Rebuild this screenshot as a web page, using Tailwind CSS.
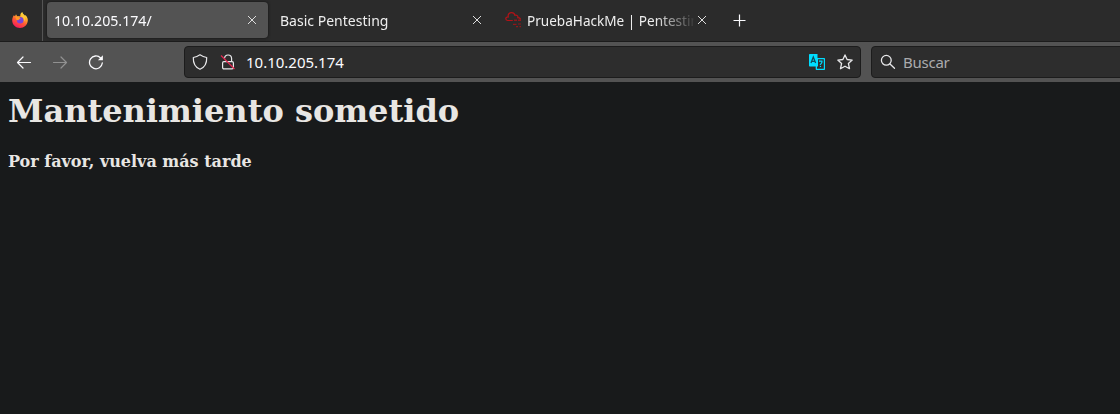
<!DOCTYPE html>
<html lang="es">
<head>
<meta charset="utf-8">
<title>10.10.205.174/</title>
<script src="https://cdn.jsdelivr.net/npm/@tailwindcss/browser@4"></script>
</head>
<body class="h-[414px] w-[1120px] overflow-hidden bg-[#181a1b] font-['Noto_Sans',sans-serif] text-[#fbfbfe]">
<div class="flex h-[42px] border-b border-[#1c1c1c] bg-[#2b2b2b] text-[15px]">
  <div class="flex w-[43px] shrink-0 items-center border-r border-[#555] pl-3">
    <svg class="-mt-0.5 h-4 w-4" viewBox="0 0 16 16">
      <defs>
        <linearGradient id="fire" x1=".8" y1="0" x2=".3" y2="1"><stop offset="0" stop-color="#fff44f"/><stop offset=".3" stop-color="#ffb52b"/><stop offset=".6" stop-color="#ff5b35"/><stop offset="1" stop-color="#f5155f"/></linearGradient>
      </defs>
      <path fill="url(#fire)" d="M1.8 3.2 3 4.3 4 2.2l1.2 2h3.1C8 2.600 8.800 1 10.400 0c.2 1.800 1.500 2.300 2.500 3.500l.7-.2C15.300 5 16 7 15.800 8.800 15.400 13 12 16 8 16 3.700 16 .2 12.700.2 8.500.2 6.500.8 4.700 1.800 3.200Z"/>
      <circle cx="8.200" cy="8.300" r="3.300" fill="#7744dc"/>
      <path fill="#ff9a28" d="M3.300 4.800 6.500 4.600 8.700 6.300 6.900 7.400 6.300 8.300 4.500 8Z"/>
      <path fill="#ffc83b" d="M9.300 4.500c2.500.7 3.200 3 2.500 5 1.300-1 1.600-3.500.6-5.500L10.400 1.500Z"/>
    </svg>
  </div>
  <div class="ml-1 mt-0.5 flex h-9 w-[221px] shrink-0 items-center justify-between rounded bg-[#535353] pl-[7px] pr-[11px] shadow-[0_0_3px_#111]">
    <span class="origin-left scale-x-[0.945]">10.10.205.174/</span>
    <svg class="h-[10px] w-[10px]" viewBox="0 0 10 10" fill="none" stroke="#ddd" stroke-width="1"><path d="m1 1 8 8M9 1 1 9"/></svg>
  </div>
  <div class="mt-0.5 flex h-9 w-[225px] shrink-0 items-center justify-between pl-3 pr-[11px]">
    <span class="origin-left scale-x-[0.935] text-[#eee]">Basic Pentesting</span>
    <svg class="h-[10px] w-[10px]" viewBox="0 0 10 10" fill="none" stroke="#ddd" stroke-width="1"><path d="m1 1 8 8M9 1 1 9"/></svg>
  </div>
  <div class="mt-0.5 flex h-9 w-[225px] shrink-0 items-center pl-3">
    <svg class="h-4 w-4 shrink-0" viewBox="0 0 16 16" fill="none" stroke="#b31217" stroke-width="1.200"><path d="M7.800 8.500H2.600C.2 8.300-.1 5 3.300 4.900 2.600 2.200 4.500.6 6.500.6c1.800 0 3 .7 3.300 2.600 2-.6 3.600.8 3 2.500 1.600 0 2.500.4 2.600 1.800"/><path stroke-width="1.600" stroke-opacity=".75" stroke-dasharray="3 1" d="M9 8.200h7"/><path stroke-opacity=".75" d="M8 12.300h3.500M13 12h3M11 14.700h2M14.500 14.700H16"/></svg>
    <div class="ml-1.5 w-[167px] [mask-image:linear-gradient(to_right,#000_128px,transparent_170px)]"><span class="block w-[184px] origin-left scale-x-[0.905] overflow-hidden whitespace-nowrap text-[#eee]">PruebaHackMe | Pentesting</span></div>
    <svg class="ml-[3px] h-[10px] w-[10px] shrink-0" viewBox="0 0 10 10" fill="none" stroke="#ddd" stroke-width="1"><path d="m1 1 8 8M9 1 1 9"/></svg>
  </div>
  <svg class="ml-[15px] mt-[14px] h-[13px] w-[13px]" viewBox="0 0 13 13" fill="none" stroke="#fbfbfe" stroke-width="1.200"><path d="M6.500.5v12M.5 6.500h12"/></svg>
</div>
<div class="flex h-10 items-center bg-[#535353] text-[15px]">
  <svg class="ml-4 h-4 w-4 shrink-0" viewBox="0 0 16 16" fill="none" stroke="#fbfbfe" stroke-width="1.200" stroke-linecap="round" stroke-linejoin="round"><path d="M14.500 8.500H1.500M7 3 1.500 8.500 7 14"/></svg>
  <svg class="ml-5 h-4 w-4 shrink-0" viewBox="0 0 16 16" fill="none" stroke="#919191" stroke-width="1.200" stroke-linecap="round" stroke-linejoin="round"><path d="M1.500 8.500h13M9 3l5.500 5.500L9 14"/></svg>
  <svg class="ml-5 h-4 w-4 shrink-0" viewBox="0 0 16 16" fill="none" stroke="#fbfbfe" stroke-width="1.300" stroke-linecap="round"><path d="M12.600 4A6.400 6.400 0 1 0 14.300 9"/><path fill="#fbfbfe" stroke="none" d="M14.900 1.300v5H9.900Z"/></svg>
  <div class="ml-20 flex h-8 w-[677px] shrink-0 items-center rounded border border-[#1c1c1c] bg-[#2d2d2d] px-[7px]">
    <svg class="h-4 w-4 shrink-0" viewBox="0 0 16 16" fill="none" stroke="#e8e8ea" stroke-width="1.200" stroke-linejoin="round"><path d="M8 .8c2 1.400 4.200 2.300 6.700 2.700.2 5-1.700 9.700-6.700 11.800C3 13.200 1.100 8.500 1.300 3.500 3.800 3.100 6 2.200 8 .8Z"/></svg>
    <svg class="ml-3 h-4 w-4 shrink-0" viewBox="0 0 16 16" fill="none" stroke="#e8e8ea" stroke-width="1.200"><rect x="2.600" y="7.600" width="10.800" height="7.300" rx="1.300"/><path d="M4.600 4.200C5 -.2 11.400 0 11.600 4.500v3"/><path stroke="#e22850" stroke-width="1.300" d="m1 1.500 13.500 13.500"/></svg>
    <span class="ml-[10px]">10.10.205.174</span>
    <svg class="ml-auto h-4 w-4 shrink-0" viewBox="0 0 16 16"><path fill="#00ddff" d="M.8 0h7.700v4h6.700q.8 0 .8.800v10.400q0 .8-.8.800H7.500q-.8 0-.8-.8V12.500H.8Q0 12.500 0 11.700V.8Q0 0 .8 0Z"/><path fill="#2d2d2d" d="M9 5.200h5.800v9.500H8v-2.200h1Z"/><path fill="none" stroke="#104c5a" stroke-width="1.300" d="M2 9 4.300 3 6.600 9M2.800 7.300h3"/><path fill="none" stroke="#00ddff" stroke-width="1.200" d="M10 7.200h3.500M13 7c.3 2-1 2.500-2 4M11.500 12v1"/></svg>
    <svg class="ml-3 h-4 w-4 shrink-0" viewBox="0 0 16 16" fill="none" stroke="#e8e8ea" stroke-width="1.300" stroke-linejoin="round"><path d="m8 .9 2.100 4.600 5.100.6-3.800 3.400 1.100 5.200L8 12.200l-4.500 2.500 1.100-5.200L.8 6.100l5.100-.6Z"/></svg>
  </div>
  <div class="ml-[10px] flex h-8 w-[260px] shrink-0 items-center rounded border border-[#1c1c1c] bg-[#2d2d2d] pl-2">
    <svg class="h-4 w-4" viewBox="0 0 16 16" fill="none" stroke="#e8e8ea" stroke-width="1.300" stroke-linecap="round"><circle cx="6.300" cy="6.300" r="4.900"/><path d="m10 10 4.500 4.300"/></svg>
    <span class="ml-[7px] tracking-[-0.25px] text-[#ababad]">Buscar</span>
  </div>
</div>
<main class="px-2 pt-[10px] font-['DejaVu_Serif',serif] font-bold text-[#e8e6e3]">
  <h1 class="text-[32px] leading-[38px]">Mantenimiento sometido</h1>
  <h4 class="mt-[22px] text-base leading-[19px]">Por favor, vuelva más tarde</h4>
</main>
</body>
</html>
